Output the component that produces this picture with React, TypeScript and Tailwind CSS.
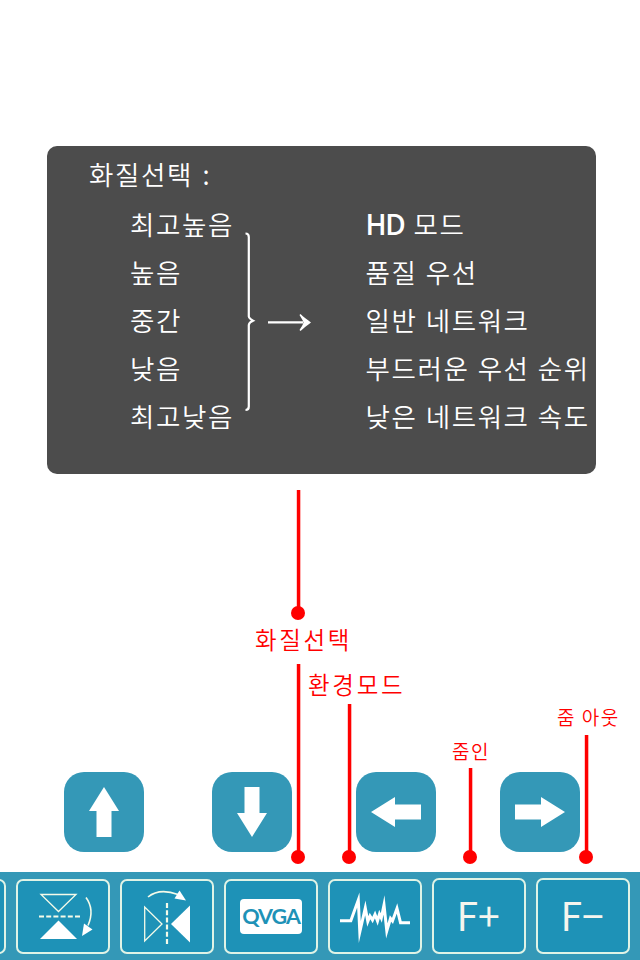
import type { ReactNode } from "react";

const KR = "font-['Noto_Sans_CJK_KR',sans-serif]";

const levels = ["최고높음", "높음", "중간", "낮음", "최고낮음"];
const modes = ["품질 우선", "일반 네트워크", "부드러운 우선 순위", "낮은 네트워크 속도"];

function QualityPanel() {
  return (
    <section className="ml-[47px] h-[328px] w-[549px] overflow-hidden rounded-[10px] bg-[#4c4c4c] text-[26.5px] font-[350] tracking-[1.6px] whitespace-nowrap text-white">
      <h1 className="pt-[4px] pl-[42px] leading-[48px] font-[350] [word-spacing:2px]">화질선택 :</h1>
      <div className="mt-[2px] flex">
        <ul className="w-[198px] shrink-0 pl-[83px] leading-[48px]">
          {levels.map((level) => (
            <li key={level}>{level}</li>
          ))}
        </ul>
        <svg className="mt-[29px] h-[184px] w-[68px] shrink-0" viewBox="245 229 68 184" fill="none" stroke="#fff">
          <path d="M245.5 233.5Q248.8 233.5 248.8 237V316.5Q249 318.5 253 320.7Q249 322.5 248.8 325V406.5Q248.8 410 245.5 410" strokeWidth="2.2" />
          <path d="M268 322.4H303" strokeWidth="2.2" />
          <path d="M311 322.4C307 319.5 303.5 317 300.5 314L299.5 315C301 318 303 320 303.5 322.4C303 325 301 327 299.5 330L300.5 331C303.5 328 307 325.5 311 322.4Z" fill="#fff" stroke="none" />
        </svg>
        <ul className="pl-[52.5px] leading-[48px] [word-spacing:0.7px]">
          <li className="flex h-12">
            <span className="w-[48px] font-['Open_Sans',sans-serif] text-[28px] font-semibold tracking-[-1.2px]">HD</span>
            <span>모드</span>
          </li>
          {modes.map((mode) => (
            <li key={mode}>{mode}</li>
          ))}
        </ul>
      </div>
    </section>
  );
}

function ArrowButton({ turn, gap }: { turn: string; gap: string }) {
  return (
    <button className={`size-20 shrink-0 rounded-[20px] bg-[#3498b7] ${gap}`}>
      <svg className={`size-20 ${turn}`} viewBox="0 0 80 80" fill="#fff">
        <path d="M40 15L55 39H47.5V65H32.5V39H25Z" />
      </svg>
    </button>
  );
}

function Tool({ children, tall }: { children?: ReactNode; tall?: boolean }) {
  return (
    <button
      className={`flex w-[94px] shrink-0 items-center justify-center rounded-[7px] border-2 border-[#e0f3e6] bg-[#1e92b7] ${tall ? "h-[76px]" : "mt-px h-[75px]"}`}
    >
      {children}
    </button>
  );
}

function Pin({ place }: { place: string }) {
  return (
    <div className={`absolute flex w-[14px] flex-col items-center ${place}`}>
      <svg className="w-[14px] flex-1" preserveAspectRatio="none" viewBox="0 0 14 10">
        <rect x="5.8" width="3.5" height="10" fill="#f00" />
      </svg>
      <div className="-mt-1 size-[14px] rounded-full bg-[#f00]" />
    </div>
  );
}

function FlipVertical() {
  return (
    <svg className="h-[72px] w-[90px]" viewBox="18 881 90 72" fill="none" stroke="#f5fbe9">
      <path d="M41 894.5H76L58.5 911.5Z" strokeWidth="1.3" />
      <path d="M39 916.5H80" strokeWidth="2.2" strokeDasharray="5 2.2" />
      <path d="M58.5 920.5L77 939H40Z" fill="#fff" stroke="none" />
      <path d="M86 897.5C91.5 905 93 914 88 925.5" strokeWidth="1.6" />
      <path d="M82 936L84 923.5L92.5 929.5Z" fill="#fff" stroke="none" />
    </svg>
  );
}

function FlipHorizontal() {
  return (
    <svg className="h-[72px] w-[90px]" viewBox="122 881 90 72" fill="none" stroke="#f5fbe9">
      <path d="M144.7 907V941L162 924Z" strokeWidth="1.3" />
      <path d="M167 903V944" strokeWidth="2.2" strokeDasharray="5 2.2" />
      <path d="M171 924L190 905.5V942.5Z" fill="#fff" stroke="none" />
      <path d="M148 897C156 890.5 167 890.5 178 894.5" strokeWidth="1.6" />
      <path d="M186 900.5L179.5 890.5L174.5 898.5Z" fill="#fff" stroke="none" />
    </svg>
  );
}

function Wave() {
  return (
    <svg className="h-[72px] w-[90px]" viewBox="330 881 90 72" fill="none" stroke="#fff">
      <path
        d="M340 920.7H350.8L358.3 900L359.8 932L365.3 908L367.8 921.5L370 916L372.5 920L375 914.5L377.5 921L379.5 914L381.3 918L384 905L386.8 931L390.5 918.5L392.5 921L397 908.5L400.5 922.7H410"
        strokeWidth="3"
        strokeMiterlimit="8"
      />
    </svg>
  );
}

export default function App() {
  return (
    <main className={`relative flex h-[960px] w-[640px] flex-col overflow-hidden bg-white pt-[146px] ${KR}`}>
      <QualityPanel />

      <nav className="mt-[298px] flex pl-16">
        <ArrowButton turn="" gap="" />
        <ArrowButton turn="rotate-180" gap="ml-[68px]" />
        <ArrowButton turn="-rotate-90" gap="ml-16" />
        <ArrowButton turn="rotate-90" gap="ml-16" />
      </nav>

      <footer className="mt-5 flex h-[88px] gap-[10px] bg-[#3498b7] pt-[6px]">
        <div className="-ml-[88px] shrink-0">
          <Tool />
        </div>
        <Tool><FlipVertical /></Tool>
        <Tool><FlipHorizontal /></Tool>
        <Tool>
          <span className="flex h-[35px] w-[62px] items-center justify-center rounded-[4px] bg-white font-[Lato,sans-serif] text-[21.5px] font-bold tracking-[-1px] text-[#1e92b7]">
            QVGA
          </span>
        </Tool>
        <Tool><Wave /></Tool>
        <Tool tall>
          <span className="pr-[2px] pb-[4px] text-[39px] leading-none text-[#f5f5ee]">F+</span>
        </Tool>
        <Tool tall>
          <span className="pr-[2px] pb-[4px] text-[39px] leading-none text-[#f5f5ee]">F−</span>
        </Tool>
      </footer>

      <Pin place="left-[291px] top-[490px] h-[130px]" />
      <Pin place="left-[291px] top-[664px] h-[200px]" />
      <Pin place="left-[342px] top-[704px] h-[160px]" />
      <Pin place="left-[463px] top-[768px] h-[96px]" />
      <Pin place="left-[579px] top-[735px] h-[129px]" />

      <div className="font-[350] whitespace-nowrap text-[#f00]">
        <span className="absolute top-[624px] left-[255px] text-[23.5px] leading-[30px] tracking-[2.6px]">화질선택</span>
        <span className="absolute top-[669px] left-[308px] text-[23.5px] leading-[30px] tracking-[2.7px]">환경모드</span>
        <span className="absolute top-[739px] left-[452px] text-[19px] leading-6 tracking-[1.5px]">줌인</span>
        <span className="absolute top-[705px] left-[557px] text-[19px] leading-6 tracking-[1.5px]">줌 아웃</span>
      </div>
    </main>
  );
}
